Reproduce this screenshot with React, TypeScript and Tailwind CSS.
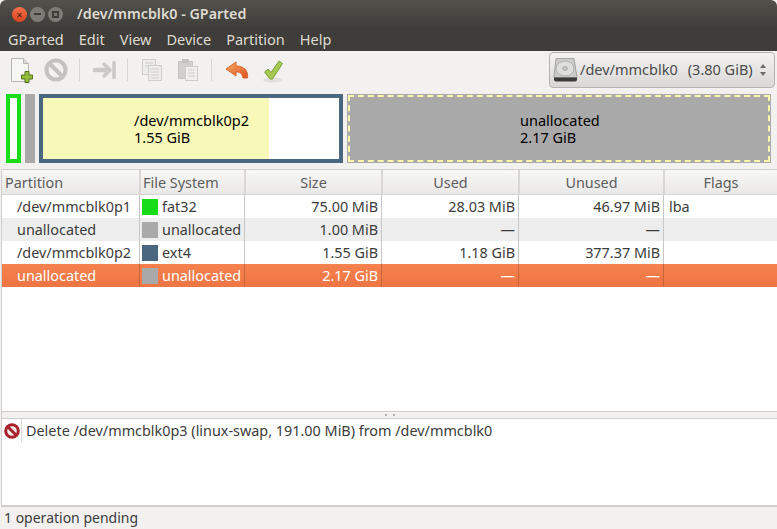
const font = { fontFamily: '"Noto Sans", "Open Sans", sans-serif' }

const columns = 'grid grid-cols-[137px_105px_137px_137px_145px_1fr]'

const rows = [
  { name: '/dev/mmcblk0p1', color: 'bg-[#18dc18]', fs: 'fat32', size: '75.00 MiB', used: '28.03 MiB', unused: '46.97 MiB', flags: 'lba', bg: 'bg-white' },
  { name: 'unallocated', color: 'bg-[#a9a9a9]', fs: 'unallocated', size: '1.00 MiB', used: '—', unused: '—', flags: '', bg: 'bg-[#ededed]' },
  { name: '/dev/mmcblk0p2', color: 'bg-[#4a6780]', fs: 'ext4', size: '1.55 GiB', used: '1.18 GiB', unused: '377.37 MiB', flags: '', bg: 'bg-white' },
  { name: 'unallocated', color: 'bg-[#a9a9a9]', fs: 'unallocated', size: '2.17 GiB', used: '—', unused: '—', flags: '', bg: 'bg-gradient-to-b from-[#f5824f] to-[#ee7443]', selected: true },
]

function NewIcon() {
  return (
    <svg width="26" height="28" viewBox="0 0 26 28">
      <path d="M1.500 2.500h12l5 5v18h-17z" fill="#f6f6f4" stroke="#b5b5b3" />
      <path d="M13.500 2.500v5h5" fill="#dcdcda" stroke="#b5b5b3" />
      <path d="M15 15.500h4v3.500h3.500v4H19v3.500h-4V23h-3.500v-4H15z" fill="#94bb3c" stroke="#55701c" />
    </svg>
  )
}

function NoIcon() {
  return (
    <svg width="24" height="24" viewBox="0 0 24 24">
      <circle cx="12" cy="12" r="9.500" fill="none" stroke="#c4c2c0" strokeWidth="4" />
      <path d="M5.500 5.500l13 13" stroke="#c4c2c0" strokeWidth="4" />
    </svg>
  )
}

function ApplyArrow() {
  return (
    <svg width="24" height="20" viewBox="0 0 24 20" fill="none" stroke="#cbc9c7" strokeLinecap="round" strokeLinejoin="round">
      <path d="M2 10h14" strokeWidth="4.500" />
      <path d="M11 4l6 6-6 6" strokeWidth="3.500" />
      <path d="M21 2.500v15" strokeWidth="3.500" />
    </svg>
  )
}

function CopyIcon() {
  return (
    <svg width="22" height="24" viewBox="0 0 22 24" fill="#ececea" stroke="#cfcdcb">
      <rect x="0.500" y="1.500" width="13" height="15" />
      <path d="M3 5h8M3 8h8" />
      <rect x="6.500" y="7.500" width="13" height="15" />
      <path d="M9 11h8M9 14h8M9 17h8M9 20h8" />
    </svg>
  )
}

function PasteIcon() {
  return (
    <svg width="22" height="24" viewBox="0 0 22 24">
      <rect x="0.500" y="3.500" width="14" height="17" fill="#d2d0ce" stroke="#c8c6c4" />
      <rect x="4" y="1" width="7" height="4" fill="#c4c2c0" />
      <rect x="7.500" y="8.500" width="12" height="14" fill="#f0efed" stroke="#cfcdcb" />
      <path d="M10 12h7M10 15h7M10 18h7" stroke="#cfcdcb" />
    </svg>
  )
}

function UndoIcon() {
  return (
    <svg width="24" height="20" viewBox="0 0 24 20">
      <defs>
        <linearGradient id="undo" x1="0" y1="0" x2="1" y2="1">
          <stop offset="0" stopColor="#f4ab66" />
          <stop offset="1" stopColor="#e0501e" />
        </linearGradient>
      </defs>
      <path d="M11 2L1 9l10 7v-4c4 0 6 1.500 7 6h4.500c1-8-4-12-11.500-12z" fill="url(#undo)" stroke="#d9692f" strokeWidth="1" strokeLinejoin="round" />
    </svg>
  )
}

function CheckIcon() {
  return (
    <svg width="22" height="26" viewBox="0 0 22 26">
      <ellipse cx="10" cy="23" rx="10" ry="2.500" fill="#e0dfdd" />
      <path d="M1.500 15l3.500-3 3 3.500L16 4l3.500 2.500L9.500 22H7z" fill="#a5c953" stroke="#7c9e35" strokeLinejoin="round" />
    </svg>
  )
}

function DiskIcon() {
  return (
    <svg width="25" height="24" viewBox="0 0 25 24">
      <path d="M3 .5h18l3 19H1z" fill="#cbcbc9" stroke="#a5a5a3" />
      <ellipse cx="12" cy="10.500" rx="9" ry="7.500" fill="#dededc" stroke="#b0b0ae" />
      <ellipse cx="12" cy="10.500" rx="2.500" ry="1.800" fill="#c8c8c6" stroke="#a5a5a3" />
      <path d="M1 19.500h23v2a2 2 0 0 1-2 2H3a2 2 0 0 1-2-2z" fill="#3b3b39" />
    </svg>
  )
}

function Divider() {
  return <div className="mx-[8px] h-[22px] w-px bg-[#d8d6d4]" />
}

function Header({ label, center, first }: { label: string; center?: boolean; first?: boolean }) {
  return (
    <div className={`flex h-full items-center bg-gradient-to-b from-[#f7f7f6] to-[#e9e8e6] pt-[1px] text-[#5d5d5d] ${center ? 'justify-center' : first ? 'pl-[3px]' : 'pl-[2px]'} ${first ? '' : 'border-l-2 border-[#d9d7d5]'}`}>
      {label}
    </div>
  )
}

export default function App() {
  return (
    <div className="flex h-[529px] w-[777px] flex-col overflow-hidden bg-[#f2f1f0] text-[14.4px] text-[#3c3c3c]" style={font}>
      {/* title bar */}
      <div className="flex h-[28px] shrink-0 items-center gap-[3px] rounded-t-[6px] bg-gradient-to-b from-[#52514c] to-[#3e3d39] pl-[12px]">
        <div className="flex h-[15px] w-[15px] items-center justify-center rounded-full bg-gradient-to-b from-[#f3704a] to-[#d8431c] text-[11px] leading-none text-[#4a2013]">×</div>
        <div className="flex h-[15px] w-[15px] items-center justify-center rounded-full bg-[#7c7b75]">
          <div className="h-[2px] w-[7px] bg-[#3e3d39]" />
        </div>
        <div className="flex h-[15px] w-[15px] items-center justify-center rounded-full bg-[#7c7b75]">
          <div className="h-[7px] w-[7px] border-2 border-[#3e3d39]" />
        </div>
        <span className="ml-[11px] text-[14.300px] font-semibold text-[#dfdbd2]">/dev/mmcblk0 - GParted</span>
      </div>

      {/* menu bar */}
      <div className="flex h-[23px] shrink-0 items-center gap-[15px] bg-[#3e3d39] pl-[8px] text-[14.500px] text-[#dfdbd2]">
        <span>GParted</span>
        <span>Edit</span>
        <span>View</span>
        <span>Device</span>
        <span>Partition</span>
        <span>Help</span>
      </div>

      {/* toolbar */}
      <div className="flex h-[38px] shrink-0 items-center pl-[10px] pr-[2px]">
        <NewIcon />
        <div className="ml-[8px]"><NoIcon /></div>
        <div className="ml-[3px]"><Divider /></div>
        <div className="ml-[5px]"><ApplyArrow /></div>
        <div className="ml-[2px]"><Divider /></div>
        <div className="ml-[6px]"><CopyIcon /></div>
        <div className="ml-[14px]"><PasteIcon /></div>
        <div className="ml-[3px]"><Divider /></div>
        <div className="ml-[5px]"><UndoIcon /></div>
        <div className="ml-[14px]"><CheckIcon /></div>
        <div className="ml-auto flex h-[36px] w-[226px] items-center rounded-[4px] border border-[#b5b3b1] bg-gradient-to-b from-[#f3f2f1] to-[#d9d8d6] pl-[3px] text-[14.500px] text-[#4b4b4b]">
          <DiskIcon />
          <span className="ml-[2px]">/dev/mmcblk0</span>
          <span className="ml-[10px]">(3.80 GiB)</span>
          <svg className="ml-auto mr-[7px]" width="8" height="14" viewBox="0 0 8 14" fill="#6b6b6b">
            <path d="M4 1l3 4H1zM4 13L1 9h6z" />
          </svg>
        </div>
      </div>

      {/* partition graph */}
      <div className="flex h-[80px] shrink-0 gap-[4px] pb-[6px] pl-[6px] pr-[6px] pt-[5px] text-[14.500px] leading-[17px] text-black">
        <div className="w-[15px] border-4 border-[#18dc18] bg-white" />
        <div className="w-[10px] bg-[#a9a9a9]" />
        <div className="flex w-[304px] border-4 border-[#4a6780] bg-white">
          <div className="w-[226px] bg-[#f8f8b8] pl-[91px] pt-[14px]">
            <div>/dev/mmcblk0p2</div>
            <div>1.55 GiB</div>
          </div>
        </div>
        <div className="flex flex-1 items-center bg-[#a9a9a9] pl-[173px] outline-2 outline-dashed -outline-offset-3 outline-[#f8f8a8]">
          <div>
            <div>unallocated</div>
            <div>2.17 GiB</div>
          </div>
        </div>
      </div>

      {/* partition table */}
      <div className="ml-[1px] flex h-[242px] shrink-0 flex-col border-l border-t border-[#d0cecc] bg-white">
        <div className={`${columns} h-[25px] shrink-0 border-b border-[#d9d7d5]`}>
          <Header label="Partition" first />
          <Header label="File System" />
          <Header label="Size" center />
          <Header label="Used" center />
          <Header label="Unused" center />
          <Header label="Flags" center />
        </div>
        {rows.map((r, i) => {
          const line = r.selected ? 'border-[#c9653a]' : 'border-[#c9c7c5]'
          return (
            <div key={i} className={`${columns} h-[23px] items-center leading-[23px] ${r.bg} ${r.selected ? 'text-white' : 'text-[#3c3c3c]'}`}>
              <div className="pl-[15px]">{r.name}</div>
              <div className={`flex h-full items-center border-l pl-[2px] ${line}`}>
                <div className={`h-[16px] w-[16px] ${r.color}`} />
                <span className="ml-[4px]">{r.fs}</span>
              </div>
              <div className={`h-full border-l pr-[3px] text-right ${line}`}>{r.size}</div>
              <div className={`h-full border-l pr-[3px] text-right ${line}`}>{r.used}</div>
              <div className={`h-full border-l pr-[3px] text-right ${line}`}>{r.unused}</div>
              <div className={`h-full border-l pl-[5px] ${line}`}>{r.flags}</div>
            </div>
          )
        })}
      </div>

      {/* pane handle */}
      <div className="ml-[1px] flex h-[7px] shrink-0 items-center justify-center border-l border-t border-[#d0cecc] bg-[#f2f1f0]">
        <div className="h-[2px] w-[10px] border-x-2 border-[#b5b3b1]" />
      </div>

      {/* pending operations */}
      <div className="ml-[1px] flex h-[89px] shrink-0 flex-col border-b-2 border-l border-t border-[#d0cecc] bg-white">
        <div className="flex h-[23px] items-center leading-[23px]">
          <div className="flex h-full w-[20px] items-center justify-center border-r border-[#d9d7d5]">
            <svg width="16" height="16" viewBox="0 0 16 16">
              <circle cx="8" cy="8" r="6.300" fill="#f4eded" stroke="#a8222a" strokeWidth="3" />
              <path d="M3.500 3.500l9 9" stroke="#a8222a" strokeWidth="3" />
            </svg>
          </div>
          <span className="ml-[4px]">Delete /dev/mmcblk0p3 (linux-swap, 191.00 MiB) from /dev/mmcblk0</span>
        </div>
      </div>

      {/* status bar */}
      <div className="flex h-[22px] shrink-0 items-center pb-[2px] pl-[4px] text-[14px]">1 operation pending</div>
    </div>
  )
}
